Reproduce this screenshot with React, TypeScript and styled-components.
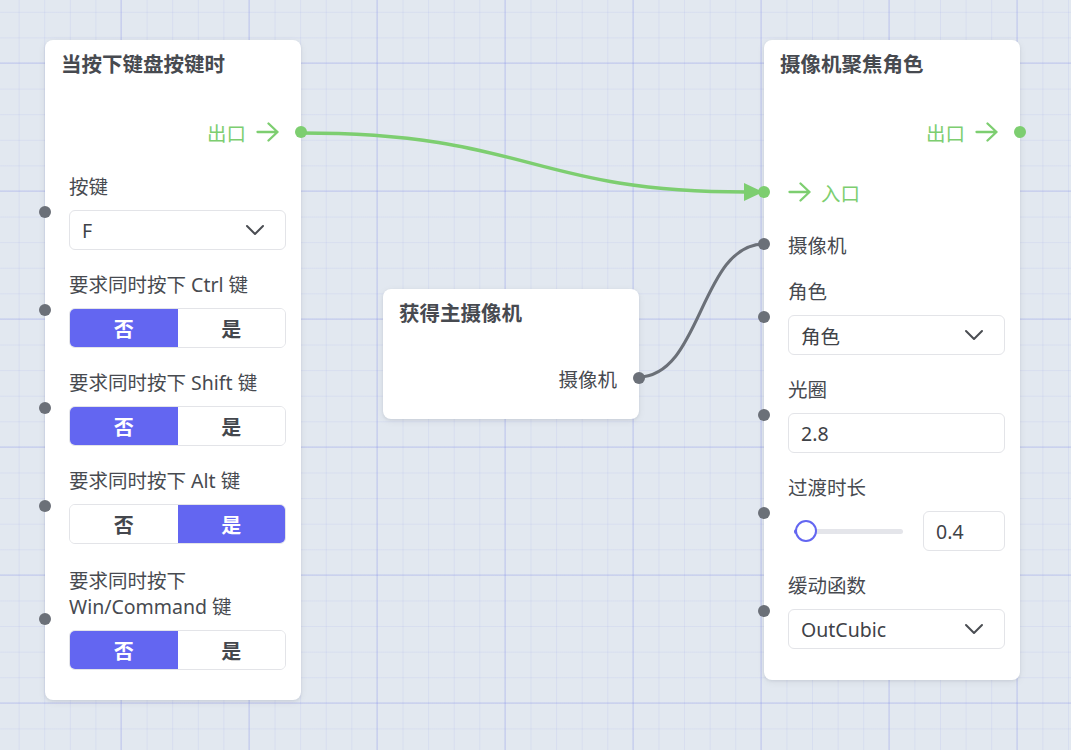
import React from "react";
import styled, { createGlobalStyle } from "styled-components";

const GREEN = "#7dce70";
const INDIGO = "#6366f1";
const PORT_GREY = "#6b7078";
const TEXT = "#474a50";

const GlobalStyle = createGlobalStyle`
  html, body {
    margin: 0;
    padding: 0;
  }
  body {
    font-family: "Noto Sans", "Noto Sans CJK SC", sans-serif;
    color: ${TEXT};
  }
`;

const Canvas = styled.div`
  position: relative;
  width: 1071px;
  height: 750px;
  overflow: hidden;
  background-color: #e2e8f0;
  background-image:
    linear-gradient(to right, rgba(120, 130, 230, 0.15) 2px, transparent 2px),
    linear-gradient(to bottom, rgba(120, 130, 230, 0.15) 2px, transparent 2px),
    linear-gradient(to right, rgba(120, 130, 230, 0.1) 1px, transparent 1px),
    linear-gradient(to bottom, rgba(120, 130, 230, 0.1) 1px, transparent 1px);
  background-size: 128px 128px, 128px 128px, 25.6px 25.6px, 25.6px 25.6px;
  background-position: 120px 62px, 120px 62px, 121px 63px, 121px 63px;
`;

const EdgeLayer = styled.svg`
  position: absolute;
  inset: 0;
  width: 100%;
  height: 100%;
  pointer-events: none;
`;

const NodeCard = styled.div<{ $x: number; $y: number }>`
  position: absolute;
  left: ${(p) => p.$x}px;
  top: ${(p) => p.$y}px;
  width: 256px;
  background: #fff;
  border-radius: 8px;
  box-shadow: 0 1px 3px rgba(15, 23, 42, 0.08), 0 2px 8px rgba(15, 23, 42, 0.06);
`;

const NodeHeader = styled.div`
  height: 46px;
  padding: 0 16px;
  display: flex;
  align-items: center;
  font-size: 20.5px;
  font-weight: 700;
  color: ${TEXT};
`;

const NodeBody = styled.div<{ $pt?: number; $pb?: number }>`
  display: flex;
  flex-direction: column;
  padding: ${(p) => p.$pt ?? 26}px 15px ${(p) => p.$pb ?? 31}px 24px;
`;

const PortRow = styled.div<{ $align: "left" | "right"; $color: string; $mt?: number }>`
  position: relative;
  height: 40px;
  margin-top: ${(p) => p.$mt ?? 0}px;
  margin-right: 7px;
  display: flex;
  align-items: center;
  justify-content: ${(p) => (p.$align === "right" ? "flex-end" : "flex-start")};
  gap: 10px;
  font-size: 19.5px;
  color: ${(p) => p.$color};
`;

const Handle = styled.span<{ $side: "left" | "right"; $color: string }>`
  position: absolute;
  top: 50%;
  ${(p) => p.$side}: ${(p) => (p.$side === "left" ? -30 : -28)}px;
  width: 12px;
  height: 12px;
  margin-top: -6px;
  border-radius: 50%;
  background: ${(p) => p.$color};
`;

const Field = styled.div<{ $mt?: number }>`
  position: relative;
  margin-top: ${(p) => p.$mt ?? 22}px;
`;

const FieldLabel = styled.div`
  font-size: 19.5px;
  line-height: 26px;
  margin-bottom: 10px;
  color: ${TEXT};
`;

const ControlBox = styled.div<{ $width?: number }>`
  box-sizing: border-box;
  height: 40px;
  width: ${(p) => (p.$width ? `${p.$width}px` : "100%")};
  flex-shrink: 0;
  border: 1px solid #e3e4e8;
  border-radius: 6px;
  background: #fff;
  display: flex;
  align-items: center;
  justify-content: space-between;
  padding: 0 20px 0 12px;
  font-size: 19.5px;
  color: #3f4247;
`;

const Toggle = styled.div`
  box-sizing: border-box;
  height: 40px;
  display: grid;
  grid-template-columns: 1fr 1fr;
  border: 1px solid #e3e4e8;
  border-radius: 6px;
  overflow: hidden;
`;

const ToggleOption = styled.div<{ $active: boolean }>`
  display: flex;
  align-items: center;
  justify-content: center;
  font-size: 20px;
  font-weight: 700;
  background: ${(p) => (p.$active ? INDIGO : "#fff")};
  color: ${(p) => (p.$active ? "#fff" : "#44474d")};
`;

const SliderRow = styled.div`
  height: 40px;
  display: flex;
  align-items: center;
  gap: 20px;
`;

const SliderTrack = styled.div`
  position: relative;
  flex: 1;
  height: 5px;
  margin-left: 6px;
  border-radius: 3px;
  background: #e4e5ea;
`;

const SliderFill = styled.div`
  position: absolute;
  left: 0;
  top: 0;
  bottom: 0;
  border-radius: 3px;
  background: ${INDIGO};
`;

const SliderThumb = styled.div`
  position: absolute;
  top: 50%;
  width: 22px;
  height: 22px;
  margin: -11px 0 0 -11px;
  box-sizing: border-box;
  border-radius: 50%;
  border: 2.5px solid ${INDIGO};
  background: #fff;
`;

const ArrowIcon = () => (
  <svg width="23" height="20" viewBox="0 0 23 20" fill="none">
    <path
      d="M1.5 10H21.5M12.5 1.5l9 8.5-9 8.5"
      stroke="currentColor"
      strokeWidth="2.3"
      strokeLinecap="round"
      strokeLinejoin="round"
    />
  </svg>
);

const Chevron = () => (
  <svg width="20" height="12" viewBox="0 0 20 12" fill="none">
    <path
      d="M2 2l8 8 8-8"
      stroke="#4a4d52"
      strokeWidth="2"
      strokeLinecap="round"
      strokeLinejoin="round"
    />
  </svg>
);

const Select: React.FC<{ value: string }> = ({ value }) => (
  <ControlBox>
    <span>{value}</span>
    <Chevron />
  </ControlBox>
);

const YesNo: React.FC<{ yes: boolean }> = ({ yes }) => (
  <Toggle>
    <ToggleOption $active={!yes}>否</ToggleOption>
    <ToggleOption $active={yes}>是</ToggleOption>
  </Toggle>
);

const InputField: React.FC<{ label: React.ReactNode; mt?: number; children: React.ReactNode }> = ({
  label,
  mt,
  children,
}) => (
  <Field $mt={mt}>
    <Handle $side="left" $color={PORT_GREY} />
    <FieldLabel>{label}</FieldLabel>
    {children}
  </Field>
);

const modifiers = [
  { label: "要求同时按下 Ctrl 键", yes: false },
  { label: "要求同时按下 Shift 键", yes: false },
  { label: "要求同时按下 Alt 键", yes: true },
  {
    label: (
      <>
        要求同时按下
        <br />
        Win/Command 键
      </>
    ),
    yes: false,
    mt: 24,
  },
];

export default function App() {
  const sliderValue = 0.4;
  const sliderPct = 11;

  return (
    <>
      <GlobalStyle />
      <Canvas>
        <EdgeLayer viewBox="0 0 1071 750">
          <path
            d="M301 133 C 530 133, 530 192, 746 192"
            fill="none"
            stroke={GREEN}
            strokeWidth="3.5"
          />
          <polygon points="744,183 763,192 744,201" fill={GREEN} />
          <path
            d="M638 377 C 702 377, 700 244, 764 244"
            fill="none"
            stroke={PORT_GREY}
            strokeWidth="3"
          />
        </EdgeLayer>

        {/* 键盘事件 */}
        <NodeCard $x={45} $y={40}>
          <NodeHeader>当按下键盘按键时</NodeHeader>
          <NodeBody $pb={30}>
            <PortRow $align="right" $color={GREEN}>
              出口
              <ArrowIcon />
              <Handle $side="right" $color={GREEN} />
            </PortRow>
            <InputField label="按键">
              <Select value="F" />
            </InputField>
            {modifiers.map((m, i) => (
              <InputField key={i} label={m.label} mt={m.mt}>
                <YesNo yes={m.yes} />
              </InputField>
            ))}
          </NodeBody>
        </NodeCard>

        {/* 主摄像机 */}
        <NodeCard $x={383} $y={289}>
          <NodeHeader>获得主摄像机</NodeHeader>
          <NodeBody $pt={23} $pb={21}>
            <PortRow $align="right" $color={TEXT}>
              摄像机
              <Handle $side="right" $color={PORT_GREY} />
            </PortRow>
          </NodeBody>
        </NodeCard>

        {/* 聚焦角色 */}
        <NodeCard $x={764} $y={40}>
          <NodeHeader>摄像机聚焦角色</NodeHeader>
          <NodeBody>
            <PortRow $align="right" $color={GREEN}>
              出口
              <ArrowIcon />
              <Handle $side="right" $color={GREEN} />
            </PortRow>
            <PortRow $align="left" $color={GREEN} $mt={20}>
              <Handle $side="left" $color={GREEN} />
              <ArrowIcon />
              入口
            </PortRow>
            <PortRow $align="left" $color={TEXT} $mt={12}>
              <Handle $side="left" $color={PORT_GREY} />
              摄像机
            </PortRow>
            <InputField label="角色" mt={15}>
              <Select value="角色" />
            </InputField>
            <InputField label="光圈">
              <ControlBox>2.8</ControlBox>
            </InputField>
            <InputField label="过渡时长">
              <SliderRow>
                <SliderTrack>
                  <SliderFill style={{ width: `${sliderPct}%` }} />
                  <SliderThumb style={{ left: `${sliderPct}%` }} />
                </SliderTrack>
                <ControlBox $width={82}>{sliderValue}</ControlBox>
              </SliderRow>
            </InputField>
            <InputField label="缓动函数">
              <Select value="OutCubic" />
            </InputField>
          </NodeBody>
        </NodeCard>
      </Canvas>
    </>
  );
}
